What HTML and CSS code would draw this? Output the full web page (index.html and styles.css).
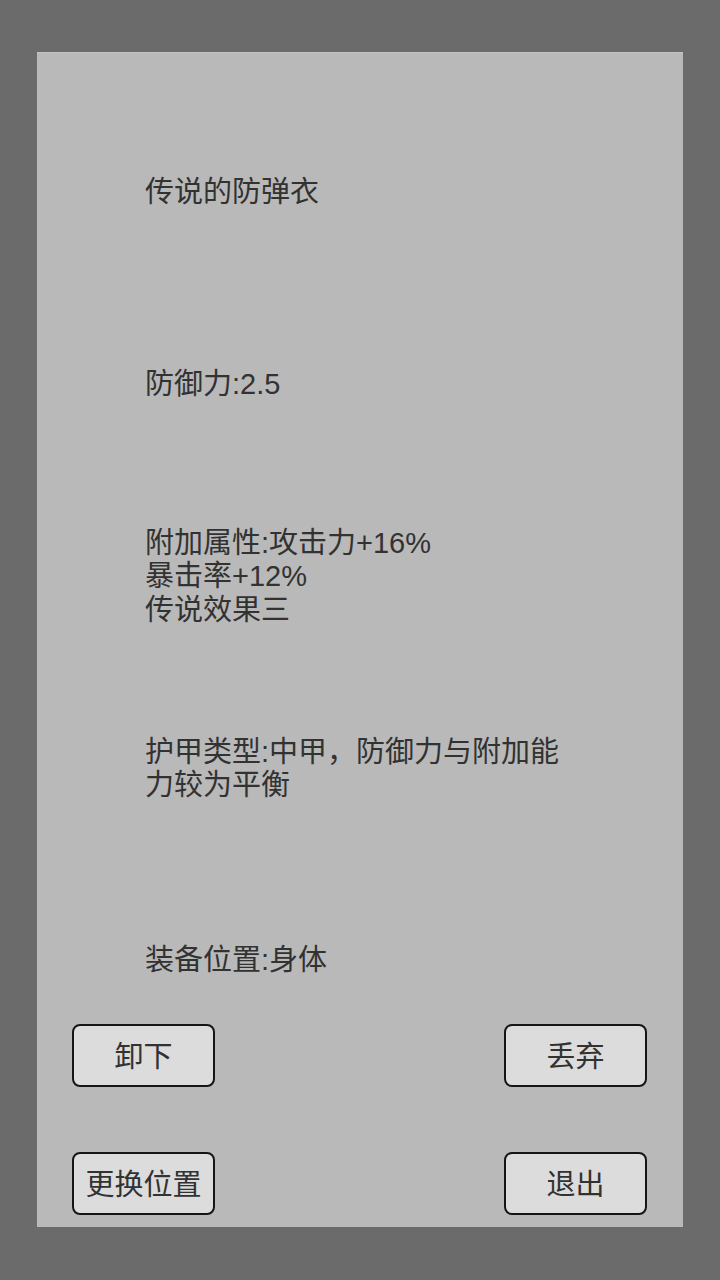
FILE: index.html
```html
<!DOCTYPE html>
<html lang="zh-CN">
<head>
    <meta charset="UTF-8">
    <meta name="viewport" content="width=device-width, initial-scale=1.0">
    <title>装备详情</title>
    <link rel="stylesheet" href="styles.css">
</head>
<body>
    <div class="panel">
        <div class="info">
            <div class="row">传说的防弹衣</div>
            <div class="row">防御力:2.5</div>
            <div class="row">附加属性:攻击力+16%<br>暴击率+12%<br>传说效果三</div>
            <div class="row">护甲类型:中甲，防御力与附加能力较为平衡</div>
            <div class="row">装备位置:身体</div>
        </div>
        <div class="actions">
            <button class="btn">卸下</button>
            <button class="btn">丢弃</button>
            <button class="btn">更换位置</button>
            <button class="btn">退出</button>
        </div>
    </div>
</body>
</html>
```

FILE: styles.css
```css
body {
    margin: 0;
    background: #6b6b6b;
    font-family: "Liberation Sans", "Noto Sans CJK SC", sans-serif;
    color: #323232;
}
.panel {
    width: 646px;
    height: 1175px;
    margin: 52px 0 0 37px;
    padding-top: 80px;
    box-sizing: border-box;
    background: #b9b9b9;
    border-top: 1px solid #c2c2c2;
    border-left: 1px solid #bdbdbd;
}
.info {
    display: grid;
    grid-template-rows: repeat(5, 120px);
    row-gap: 72px;
    padding-left: 107px;
}
.row {
    width: 430px;
    display: flex;
    flex-direction: column;
    justify-content: center;
    font-size: 29px;
    line-height: 33.5px;
}
.actions {
    display: grid;
    grid-template-columns: 143px 143px;
    justify-content: space-between;
    row-gap: 65px;
    margin-top: 3px;
    padding: 0 36px 0 34px;
}
.btn {
    height: 63px;
    background: #dcdcdc;
    border: 2px solid #151515;
    border-radius: 8px;
    font-family: inherit;
    font-size: 29px;
    color: #323232;
    padding: 0 0 4px;
}
```
